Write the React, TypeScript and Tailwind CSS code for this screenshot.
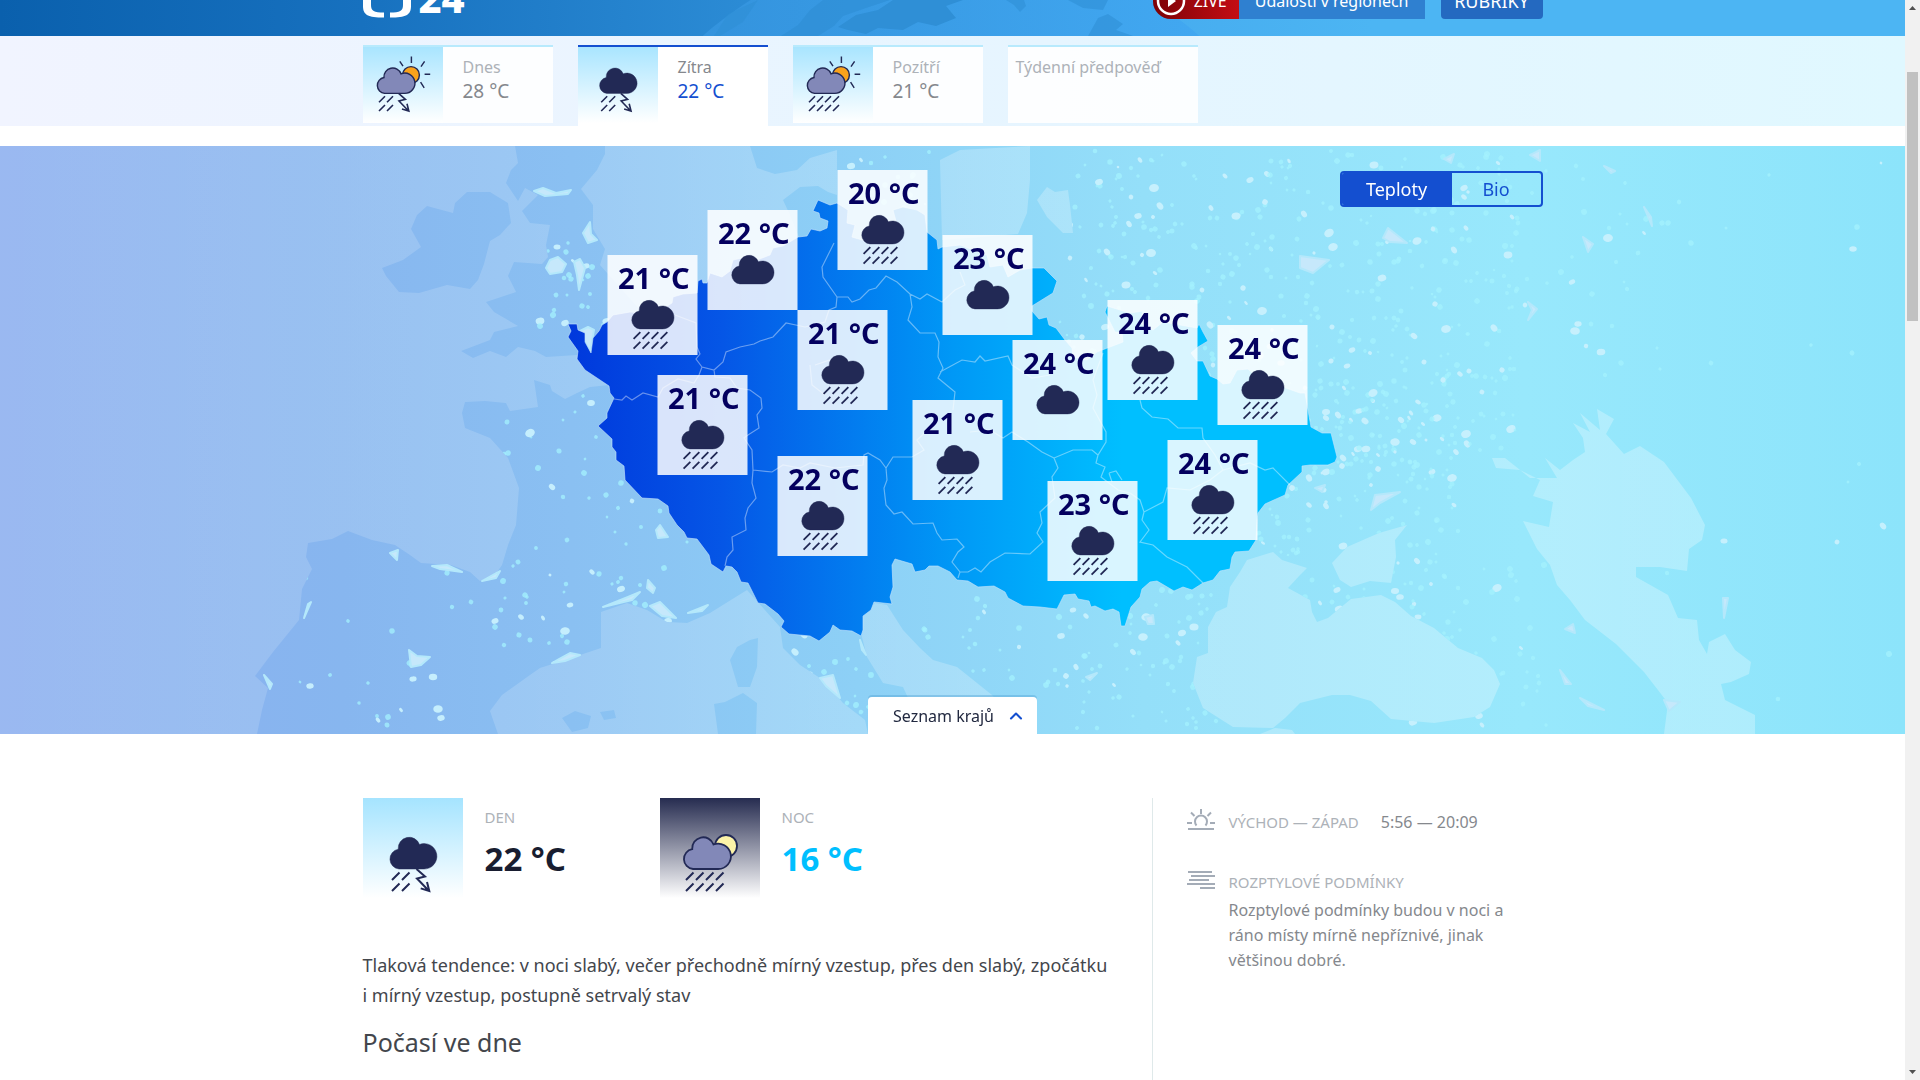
import { ChevronUp } from "lucide-react";

const NAVY = "#222955";

type Sky = "cloud" | "rain" | "storm";
type Extra = "none" | "sun" | "moon";

const CLOUD =
  "M36 71 A10 10 0 0 1 35.2 51.2 A11 11 0 0 1 56.5 46.5 A12.7 12.7 0 1 1 61 71 Z";

function WeatherIcon({
  sky,
  extra = "none",
  viewBox = "0 0 100 100",
  className,
}: {
  sky: Sky;
  extra?: Extra;
  viewBox?: string;
  className: string;
}) {
  const shift = extra === "sun" ? -9 : extra === "moon" ? -3 : 0;
  const columns = sky === "storm" ? [30, 40] : sky === "rain" ? [30, 40, 50, 60] : [];
  return (
    <svg viewBox={viewBox} className={className} aria-hidden="true">
      {extra === "sun" && (
        <g stroke={NAVY} strokeWidth="1.8" fill="none">
          <circle cx="60" cy="48" r="10.5" fill="#faa21b" />
          <path d="M60.500 25v8M46 31l4 6M77 31l-4.500 6.500M77 47h7M72 57l4.500 7" />
        </g>
      )}
      {extra === "moon" && (
        <circle cx="66" cy="48" r="11" fill="#fcf3a8" stroke={NAVY} strokeWidth="1.8" />
      )}
      <g transform={`translate(${shift} 0)`}>
        <path
          d={CLOUD}
          fill={extra === "none" ? NAVY : "#8288b8"}
          stroke={NAVY}
          strokeWidth={extra === "none" ? 0.5 : 1.8}
        />
        <g stroke={NAVY} strokeWidth="2" fill="none">
          {columns.map((x) => (
            <path key={x} d={`M${x - 1} 82l7.5 -7.5M${x - 1} 93l7.5 -7.5`} />
          ))}
          {sky === "storm" && (
            <path d="M53.5 71l8.5 7.5l-8 2l12 12.5M64 84l2.3 9l-8.6 -2.6" />
          )}
        </g>
      </g>
    </svg>
  );
}

const days: { name: string; temp?: string; sky?: Sky; extra?: Extra; active?: boolean }[] = [
  { name: "Dnes", temp: "28 °C", sky: "storm", extra: "sun" },
  { name: "Zítra", temp: "22 °C", sky: "storm", extra: "none", active: true },
  { name: "Pozítří", temp: "21 °C", sky: "rain", extra: "sun" },
  { name: "Týdenní předpověď" },
];

const pins: { x: number; y: number; t: number; sky: Sky }[] = [
  { x: 607, y: 109, t: 21, sky: "rain" },
  { x: 707, y: 64, t: 22, sky: "cloud" },
  { x: 837, y: 24, t: 20, sky: "rain" },
  { x: 942, y: 89, t: 23, sky: "cloud" },
  { x: 797, y: 164, t: 21, sky: "rain" },
  { x: 657, y: 229, t: 21, sky: "rain" },
  { x: 1107, y: 154, t: 24, sky: "rain" },
  { x: 1217, y: 179, t: 24, sky: "rain" },
  { x: 1012, y: 194, t: 24, sky: "cloud" },
  { x: 912, y: 254, t: 21, sky: "rain" },
  { x: 777, y: 310, t: 22, sky: "rain" },
  { x: 1167, y: 294, t: 24, sky: "rain" },
  { x: 1047, y: 335, t: 23, sky: "rain" },
];

const SEA = [
  // Atlantic, Channel and North Sea
  "M0 146 L750 146 757 168 775 174 797 170 810 158 837 150 837 195 828 192 818 186 800 187 783 200 790 215 800 240 700 300 620 330 590 365 609 385 590 387 577 393 565 399 552 391 550 385 534 380 538 407 510 411 506 403 485 401 465 402 462 413 465 428 490 438 508 458 519 488 516 525 508 545 502 565 495 575 480 581 470 572 451 565 421 563 410 555 395 545 372 540 348 531 332 539 308 543 306 557 312 569 302 589 299 620 273 652 255 676 268 688 262 710 257 734 0 734Z",
  // Great Britain
  "M515 146 518 163 511 170 506 183 518 201 525 188 538 195 522 211 530 223 550 225 546 245 548 257 542 264 514 262 508 276 516 292 486 302 494 312 518 326 494 332 490 340 461 351 473 358 490 351 506 357 518 347 535 351 546 357 577 355 590 355 640 310 600 265 605 249 593 229 593 205 581 189 597 170 605 154 605 146Z",
  // Ireland
  "M467 192 490 192 508 203 511 223 500 235 490 241 484 264 478 280 470 289 447 285 419 293 399 292 386 276 382 268 403 260 421 247 411 229 417 215 427 206 453 213 455 203Z",
  // Western Mediterranean
  "M601 612 627 603 647 610 667 622 687 623 710 613 747 590 780 627 783 648 800 665 823 680 843 703 865 720 868 734 498 734 490 711 502 695 530 675 540 668 565 660 601 648Z",
  "M750 640 758 638 757 667 750 687 738 687 730 660 737 647Z",
  "M714 704 725 702 743 693 757 703 756 734 718 734Z",
  "M562 718 575 711 591 716 588 728 572 732Z M600 712 614 710 616 718 604 720Z",
  // Adriatic
  "M863 617 875 603 887 605 903 630 920 648 933 660 957 667 992 695 1025 734 925 734 903 687 883 683 867 657 862 637Z",
  // Black Sea and Azov
  "M1230 587 1240 572 1247 560 1273 552 1282 560 1307 568 1300 575 1288 588 1310 600 1312 612 1317 622 1328 618 1351 599 1381 595 1395 602 1411 616 1434 628 1458 648 1482 658 1494 670 1500 684 1490 707 1474 717 1434 723 1391 719 1371 701 1350 695 1332 695 1300 703 1285 718 1273 728 1233 727 1203 708 1193 683 1197 657 1208 653 1208 627 1216 612 1227 607Z",
  "M1407 525 1395 540 1396 557 1391 583 1370 581 1351 587 1340 580 1332 563 1347 547 1379 533Z",
  // Caspian
  "M1597 409 1614 419 1606 434 1624 454 1640 446 1664 462 1691 498 1705 525 1702 540 1689 549 1687 571 1660 567 1636 567 1636 577 1668 595 1678 618 1697 620 1699 640 1707 654 1709 642 1725 634 1735 650 1751 662 1749 674 1731 682 1721 684 1725 700 1755 715 1755 734 1664 734 1668 703 1644 672 1616 644 1585 620 1570 600 1557 585 1550 565 1537 549 1523 521 1549 527 1553 502 1533 496 1540 480 1520 470 1496 468 1492 458 1505 458 1530 478 1557 478 1545 458 1560 470 1573 460 1585 452 1583 438 1573 423 1590 432 1580 413 1600 430Z",
  // Baltic and Gulf of Riga
  "M940 160 960 150 1030 146 1030 180 1027 213 1018 234 942 240Z",
  "M1037 200 1047 187 1055 192 1068 190 1070 205 1073 233 1063 233 1047 217Z",
  "M1260 734 1275 728 1292 730 1295 734Z",
].join(" ");

const COUNTRY =
  "M568 324 577 324 578 330 585 333 585 342 591 353 593 338 599 331 602 325 607 322 613 315 630 312 655 314 672 303 673 297 683 294 697 293 698 281 702 279 703 283 707 283 710 273 722 277 730 271 733 260 747 257 757 260 770 255 773 248 783 246 798 237 807 236 811 229 820 231 827 228 828 221 820 218 819 213 813 211 818 200 830 205 837 203 848 210 847 223 855 225 852 237 862 240 878 240 897 225 893 210 903 207 917 210 925 215 927 232 937 240 938 249 942 247 960 245 987 255 990 267 1003 265 1008 277 1020 270 1032 268 1044 268 1057 281 1053 293 1032 306 1032 311 1039 319 1047 317 1049 325 1056 328 1065 340 1072 348 1073 357 1087 360 1097 352 1102 350 1123 342 1122 333 1115 332 1105 312 1107 306 1130 313 1143 311 1140 323 1153 330 1163 322 1197 328 1199 324 1203 332 1208 341 1198 347 1191 353 1197 361 1203 361 1210 376 1217 379 1223 384 1230 383 1237 370 1248 369 1260 380 1283 387 1300 393 1305 393 1308 410 1311 427 1322 433 1331 433 1337 457 1335 462 1328 465 1310 465 1302 466 1302 472 1288 485 1285 495 1265 504 1258 513 1257 520 1256 540 1249 551 1235 552 1232 557 1230 569 1220 571 1213 580 1203 583 1192 590 1183 587 1174 591 1157 581 1150 582 1142 589 1140 597 1131 607 1125 626 1121 626 1119 612 1113 609 1105 611 1095 606 1091 607 1089 601 1078 599 1075 594 1064 595 1057 609 1040 607 1023 606 1008 598 1005 592 994 586 978 587 968 581 957 580 950 572 938 566 929 566 925 570 915 572 912 564 895 559 892 565 893 587 890 597 892 604 874 602 871 610 863 616 863 630 861 636 852 631 840 630 833 625 830 632 819 641 810 636 789 634 781 627 784 621 778 614 765 604 758 603 748 583 741 582 737 572 732 567 726 566 723 572 711 564 709 555 697 539 687 538 684 532 677 525 669 513 668 506 658 499 642 498 625 480 624 466 616 460 616 452 612 447 612 439 598 426 607 418 607 413 614 398 610 393 609 386 585 370 577 359 578 351 568 337 571 331Z";

const REGIONS = [
  "M834 243 822 267 823 277 837 297 848 297 852 302 860 299 869 290 876 288 886 276 897 282 910 294 920 299 927 294 942 302 955 290 965 285 960 272",
  "M837 297 836 307 829 310 825 322 805 327 786 323 773 337 760 341 754 344 740 347 726 352 723 362 714 370 702 367 696 359 700 354 697 347 696 323 675 315",
  "M702 367 699 375 694 383 678 379 663 388 658 397 643 393 632 400 626 396 622 400 614 399",
  "M714 370 715 377 730 378 737 388 750 390 761 398 762 408 757 415 759 428 748 435 744 438 752 450 753 470 752 483 756 498 748 508 745 518 746 530 732 537 733 550 727 557 725 566",
  "M753 470 772 472 783 465 800 468 810 463 835 468 863 465 864 455 868 453 880 460 886 468 893 457 912 457 924 450 917 440 930 428",
  "M886 468 887 480 884 488 886 505 894 514 902 512 913 524 933 523 937 533 942 540 957 539 964 547 958 552 952 562 960 572 958 578",
  "M960 572 968 572 975 568 981 572 990 562 1005 553 1030 554 1043 542 1037 533 1042 523 1040 512 1055 498 1052 477 1058 468 1054 458 1073 450 1092 450 1098 455 1106 442 1106 432 1093 408 1097 395 1093 380 1103 353",
  "M1054 458 1042 452 1028 442 1012 432 1003 438 990 430 970 432",
  "M940 372 962 360 975 362 980 356 985 361 1008 356 1012 365 1032 378 1050 375",
  "M910 294 912 307 908 320 920 333 935 333 939 342 938 357 943 368 938 378 955 392 953 410",
  "M1140 400 1142 408 1152 417 1168 419 1178 428 1202 428 1203 438 1215 455 1223 470 1250 463 1265 470 1273 468 1290 485",
  "M1098 455 1096 463 1105 467 1101 477 1118 490 1130 493 1140 500 1144 512 1163 502 1167 488 1190 490 1210 480 1223 470",
  "M1144 512 1142 520 1149 530 1140 542 1153 545 1167 557 1187 567 1203 583",
  "M815 365 830 360 850 368 M810 365 812 385 825 395",
  "M1109 473 1116 471 1122 480 M1109 473 1112 482",
].join(" ");

const ARC =
  "M534 191 543 188 556 193 571 190 568 194 545 196Z M583 233 590 222 591 234 597 240 588 243Z M546 268 550 260 558 257 566 264 562 272 550 274Z M574 262 580 259 585 268 579 290 577 275Z M578 332 588 327 594 330 590 352 584 340Z";
const CITIES =
  "M409 650 417 656 430 657 421 665 411 667Z M264 675 272 684 270 689Z M304 618 308 604 311 602Z M390 553 398 550 397 560Z M432 566 447 565 462 572 440 569Z M482 581 500 571 496 578Z M603 607 628 597 640 592 632 600Z M647 588 648 580 655 588 653 593Z M650 606 660 602 676 618 662 616Z M656 530 660 525 668 537 658 538Z M552 663 570 653 580 655 565 661Z M688 613 708 605 702 611Z M820 678 833 675 840 698 826 686Z M860 640 866 655 862 650Z M1300 256 1329 260 1313 273 1300 268Z M1383 238 1388 228 1407 243 1390 242Z M1444 159 1454 154 1451 163Z M1530 155 1540 150 1540 161Z M1604 166 1615 171 1611 173Z M1644 207 1651 217 1652 226Z M1583 237 1593 244 1588 252Z M1528 302 1537 309 1528 320 1532 310Z M1371 510 1375 495 1400 492 1380 503Z M1315 488 1325 485 1322 492Z M1086 677 1097 673 1090 680Z M1145 617 1153 615 1154 624 1148 624Z M1565 629 1573 624 1575 633Z M1560 670 1571 684 1565 684Z M1580 698 1604 710 1588 706Z M1723 598 1728 598 1724 618Z M1664 700 1680 702 1669 711Z";

// Small city lights, spread with a fixed-seed generator.
function makeLights() {
  let seed = 7;
  const next = () => {
    seed = (seed * 16807) % 2147483647;
    return seed / 2147483647;
  };
  const areas = [
    { x: 1060, y: 150, w: 460, h: 330, n: 520 },
    { x: 1250, y: 380, w: 210, h: 270, n: 240 },
    { x: 960, y: 590, w: 260, h: 140, n: 110 },
    { x: 480, y: 390, w: 230, h: 260, n: 80 },
    { x: 540, y: 240, w: 70, h: 110, n: 30 },
    { x: 300, y: 560, w: 250, h: 170, n: 30 },
    { x: 1400, y: 560, w: 150, h: 170, n: 60 },
    { x: 1500, y: 160, w: 200, h: 220, n: 40 },
    { x: 1650, y: 150, w: 250, h: 560, n: 18 },
    { x: 790, y: 620, w: 140, h: 110, n: 35 },
    { x: 850, y: 150, w: 100, h: 80, n: 14 },
  ];
  return areas.flatMap((a) =>
    Array.from({ length: a.n }, () => ({
      x: Math.round(a.x + next() * a.w),
      y: Math.round(a.y + next() * a.h),
      r: 1.3 + next() * 1.7,
      k: next(),
    })),
  );
}
const lights = makeLights();

function EuropeMap() {
  return (
    <svg
      viewBox="0 146 1905 588"
      preserveAspectRatio="xMidYMid slice"
      className="absolute inset-0 h-full w-full"
      role="img"
      aria-label="Mapa teplot"
    >
      <defs>
        <linearGradient id="land" gradientUnits="userSpaceOnUse" x1="0" x2="1905" y1="0" y2="0">
          <stop offset="0" stopColor="#8baeef" />
          <stop offset="0.18" stopColor="#87b6ef" />
          <stop offset="0.3" stopColor="#8ac0f2" />
          <stop offset="0.45" stopColor="#8dd0f6" />
          <stop offset="0.6" stopColor="#94dff9" />
          <stop offset="0.8" stopColor="#98e8fc" />
          <stop offset="1" stopColor="#8ce4fb" />
        </linearGradient>
        <linearGradient id="sea" gradientUnits="userSpaceOnUse" x1="0" x2="1905" y1="0" y2="0">
          <stop offset="0" stopColor="#fff" stopOpacity="0.13" />
          <stop offset="0.3" stopColor="#fff" stopOpacity="0.16" />
          <stop offset="0.6" stopColor="#fff" stopOpacity="0.25" />
          <stop offset="1" stopColor="#fff" stopOpacity="0.28" />
        </linearGradient>
        <linearGradient id="country" gradientUnits="userSpaceOnUse" x1="568" x2="1337" y1="0" y2="0">
          <stop offset="0" stopColor="#0038dc" />
          <stop offset="0.2" stopColor="#0556e6" />
          <stop offset="0.5" stopColor="#0098f6" />
          <stop offset="0.72" stopColor="#00bfff" />
          <stop offset="1" stopColor="#00bfff" />
        </linearGradient>
        <filter id="glow">
          <feGaussianBlur stdDeviation="0.7" />
        </filter>
        <mask id="dry">
          <rect x="0" y="146" width="1905" height="588" fill="#fff" />
          <path d={SEA} fillRule="evenodd" fill="#000" />
        </mask>
      </defs>
      <rect x="0" y="146" width="1905" height="588" fill="url(#land)" />
      <path d={SEA} fillRule="evenodd" fill="url(#sea)" />
      <g filter="url(#glow)">
        <g mask="url(#dry)">
          {lights.map((l, i) => (
            <ellipse
              key={i}
              cx={l.x}
              cy={l.y}
              rx={l.k > 0.92 ? l.r + 2 : l.r}
              ry={l.k > 0.85 ? l.r + 1 : l.r}
              transform={`rotate(${Math.round(l.k * 360)} ${l.x} ${l.y})`}
              fill={l.k > 0.8 ? "#c8f0fd" : "#a4f2fd"}
              opacity={l.k > 0.8 ? 0.95 : 0.75}
            />
          ))}
        </g>
        <path
          d={ARC + CITIES}
          fill="#c6e8fb"
          stroke="#b4e8fb"
          strokeWidth="2"
          strokeLinejoin="round"
        />
      </g>
      <path d={COUNTRY} fill="url(#country)" stroke="#c8e4fb" strokeOpacity="0.6" strokeWidth="1" />
      <path d={REGIONS} fill="none" stroke="#fff" strokeOpacity="0.4" strokeWidth="1.2" />
    </svg>
  );
}

function Globe() {
  return (
    <svg
      viewBox="700 0 510 36"
      preserveAspectRatio="xMidYMax slice"
      className="absolute bottom-0 left-1/2 h-9 w-[510px] -translate-x-1/2"
      aria-hidden="true"
    >
      <defs>
        <linearGradient id="globe" x1="0" x2="1">
          <stop offset="0" stopColor="#3492dc" />
          <stop offset="1" stopColor="#42aaf5" />
        </linearGradient>
      </defs>
      <circle cx="953" cy="317" r="375" fill="url(#globe)" opacity="0.8" />
      <g fill="#2f8fd6">
        <path d="M783 36 800 25 812 10 825 0 892 0 868 8 845 16 836 26 820 36Z" opacity="0.7" />
        <path d="M840 27 858 15 880 10 895 0 965 0 948 6 958 18 938 26 920 22 905 30 880 28 868 34 850 30Z" />
        <path d="M1008 0 1026 0 1028 6 1022 12 1016 5Z M730 14 760 0 745 22 722 36 716 36Z" opacity="0.6" />
        <path d="M1090 36 1100 18 1110 14 1125 24 1118 30 1135 36Z M1070 0 1110 0 1105 10 1085 8Z" opacity="0.6" />
      </g>
    </svg>
  );
}

function Header() {
  return (
    <header className="relative h-9 overflow-hidden bg-[linear-gradient(90deg,#0a60ad_0%,#1771bf_19%,#2e8fd8_42%,#46acef_60%,#4cb5f3_72%,#4cb5f3_100%)]">
      <Globe />
      <div className="relative mx-auto flex h-9 max-w-[1180px] items-end justify-between">
        <a href="#domu" aria-label="ČT24" className="flex items-end gap-2 text-white">
          <svg viewBox="0 0 48 36" className="h-9 w-12" aria-hidden="true">
            <path
              d="M0 0V6C0 15 5 17.500 21 17.500V12.500C11 12.500 8 11 8 5V0ZM48 0V6C48 15 43 17.500 27 17.500V12.500C37 12.500 40 11 40 5V0Z"
              fill="#fff"
            />
          </svg>
          <span className="pb-4 text-[40px] leading-[44px] font-extrabold">24</span>
        </a>
        <div className="flex gap-4 pb-[17px] text-base text-white">
          <div className="flex h-9 items-center rounded-l-full rounded-r bg-[#2f80d0]">
            <a
              href="#zive"
              className="flex h-9 items-center gap-2 rounded-l-full rounded-r bg-[linear-gradient(90deg,#7d0206,#c40d14)] pr-3 pl-[3px]"
            >
              <svg viewBox="0 0 30 30" className="size-[30px]" aria-hidden="true">
                <circle cx="15" cy="15" r="13" fill="none" stroke="#fff" strokeWidth="2.5" />
                <path d="M12 9l8 6-8 6Z" fill="#fff" />
              </svg>
              ŽIVĚ
            </a>
            <a href="#regiony" className="px-4">
              Události v regionech
            </a>
          </div>
          <button type="button" className="h-9 w-[102px] rounded bg-[#2469c0] text-[18px]">
            RUBRIKY
          </button>
        </div>
      </div>
    </header>
  );
}

function DayTabs() {
  return (
    <nav className="h-[90px] bg-[linear-gradient(90deg,#f1f4ff_0%,#e6f5ff_55%,#e0f8ff_100%)] pt-[9px]">
      <div className="mx-auto grid h-[81px] max-w-[1180px] grid-cols-[repeat(4,190px)] gap-[25px]">
        {days.map((d) => (
          <a
            key={d.name}
            href={`#${d.name}`}
            className={
              d.active
                ? "flex h-[81px] border-t-2 border-[#144fd0] bg-white"
                : "flex h-[78px] border-t-2 border-[#b8eafd] bg-white/90"
            }
          >
            {d.sky && (
              <span className="h-[76px] w-20 bg-[linear-gradient(180deg,#a9e5ff,#fff)]">
                <WeatherIcon sky={d.sky} extra={d.extra} viewBox="0 13 100 95" className="h-[76px] w-20" />
              </span>
            )}
            <span className={d.sky ? "flex flex-col pt-2 pl-5" : "flex flex-col pt-2 pl-2"}>
              <span
                className={
                  d.active
                    ? "text-base leading-6 text-[#85888d]"
                    : "text-base leading-6 text-[#adb2b8]"
                }
              >
                {d.name}
              </span>
              {d.temp && (
                <span
                  className={
                    d.active
                      ? "text-[19px] leading-6 text-[#144fd0]"
                      : "text-[19px] leading-6 text-[#85888d]"
                  }
                >
                  {d.temp}
                </span>
              )}
            </span>
          </a>
        ))}
      </div>
    </nav>
  );
}

function MapSection() {
  return (
    <section className="relative mt-5 h-[588px] overflow-hidden">
      <EuropeMap />
      <div className="absolute top-0 left-1/2 h-[588px] w-[1905px] -translate-x-1/2">
        {pins.map((p) => (
          <a
            key={`${p.x}-${p.y}`}
            href="#kraj"
            className="absolute flex h-[100px] w-[90px] flex-col items-center bg-white/85"
            style={{ left: p.x, top: p.y }}
          >
            <span className="absolute top-1 left-[11px] text-[29px] leading-[38px] font-bold whitespace-nowrap text-[#04005f]">
              {p.t} °C
            </span>
            <WeatherIcon sky={p.sky} className="mt-[10px] size-[90px]" />
          </a>
        ))}
      </div>
      <div className="relative mx-auto flex h-full max-w-[1180px] flex-col items-end justify-between pt-[25px]">
        <div className="flex h-9 w-[203px] overflow-hidden rounded border-2 border-[#144fd0] text-[18px]">
          <button type="button" className="w-[110px] bg-[#144fd0] text-white">
            Teploty
          </button>
          <button type="button" className="flex-1 text-[#144fd0]">
            Bio
          </button>
        </div>
        <button
          type="button"
          className="flex h-[37px] w-[169px] items-center justify-between self-center rounded-t bg-white pr-[11px] pl-[25px] text-base text-[#222940] shadow-[0_-2px_0_rgba(80,160,210,0.4)]"
        >
          Seznam krajů
          <ChevronUp className="size-5 text-[#144fd0]" strokeWidth={2.5} />
        </button>
      </div>
    </section>
  );
}

function Reading({ label, value, night }: { label: string; value: string; night?: boolean }) {
  return (
    <div className="flex w-[297px] gap-[22px]">
      <div
        className={
          night
            ? "size-[100px] bg-[linear-gradient(180deg,#262c50,#fff)]"
            : "size-[100px] bg-[linear-gradient(180deg,#a5e4ff,#fff)]"
        }
      >
        <WeatherIcon
          sky={night ? "rain" : "storm"}
          extra={night ? "moon" : "none"}
          className="size-[100px]"
        />
      </div>
      <div className="flex flex-col pt-2">
        <span className="text-[15px] leading-[22px] text-[#adb2b8]">{label}</span>
        <span
          className={
            night
              ? "pt-2 text-[33px] leading-[46px] font-bold text-[#00bfff]"
              : "pt-2 text-[33px] leading-[46px] font-bold text-[#181d30]"
          }
        >
          {value}
        </span>
      </div>
    </div>
  );
}

function Details() {
  return (
    <section className="mx-auto flex w-full max-w-[1180px] flex-1 pt-16">
      <div className="w-[789px]">
        <div className="flex">
          <Reading label="DEN" value="22 °C" />
          <Reading label="NOC" value="16 °C" night />
        </div>
        <p className="w-[760px] pt-[52px] text-[18px] leading-[30px] text-[#43464c]">
          Tlaková tendence: v noci slabý, večer přechodně mírný vzestup, přes den slabý, zpočátku
          <br />i mírný vzestup, postupně setrvalý stav
        </p>
        <h2 className="pt-[14px] text-[25px] leading-9 text-[#43464c]">Počasí ve dne</h2>
      </div>
      <aside className="flex-1 border-l border-[#dfe9ea] pt-[10px] pl-[34px] text-[#85888d]">
        <div className="flex">
          <svg
            viewBox="0 0 28 24"
            className="h-6 w-[42px] flex-none pr-[14px]"
            fill="none"
            stroke="#a4acb7"
            strokeWidth="2"
            aria-hidden="true"
          >
            <path d="M1 21h26M9.500 17.500a6 6 0 1 1 9 0M14 1v5M4 4.500l3.500 3.500M24 4.500l-3.500 3.500M0 15h5M23 15h5" />
          </svg>
          <p className="flex items-center gap-[22px] pt-[2px] leading-6">
            <span className="text-[15px] text-[#adb2b8]">VÝCHOD — ZÁPAD</span>
            <span className="text-base">5:56 — 20:09</span>
          </p>
        </div>
        <div className="flex pt-9">
          <svg
            viewBox="0 0 28 20"
            className="h-5 w-[42px] flex-none pr-[14px]"
            fill="none"
            stroke="#a4acb7"
            strokeWidth="2"
            aria-hidden="true"
          >
            <path d="M1 2h24M4 6h24M2 10h20M0 14h28M13 18h15" />
          </svg>
          <div>
            <h3 className="text-[15px] leading-6 text-[#adb2b8]">ROZPTYLOVÉ PODMÍNKY</h3>
            <p className="max-w-[290px] pt-1 text-base leading-[25px]">
              Rozptylové podmínky budou v noci a ráno místy mírně nepříznivé, jinak většinou dobré.
            </p>
          </div>
        </div>
      </aside>
    </section>
  );
}

function Scrollbar() {
  return (
    <div className="flex w-[15px] flex-none flex-col items-center bg-[#f1f1f1]" aria-hidden="true">
      <svg viewBox="0 0 15 17" className="h-[17px] w-[15px]">
        <path d="M4 10l3.500-4 3.500 4Z" fill="#505050" />
      </svg>
      <div className="mt-[55px] h-[249px] w-[11px] bg-[#c1c1c1]" />
      <svg viewBox="0 0 15 17" className="mt-auto h-[17px] w-[15px]">
        <path d="M4 7l3.500 4 3.500-4Z" fill="#505050" />
      </svg>
    </div>
  );
}

export default function App() {
  return (
    <div className="flex h-screen overflow-hidden bg-white font-['Noto_Sans',sans-serif]">
      <main className="flex min-w-0 flex-1 flex-col">
        <Header />
        <DayTabs />
        <MapSection />
        <Details />
      </main>
      <Scrollbar />
    </div>
  );
}
